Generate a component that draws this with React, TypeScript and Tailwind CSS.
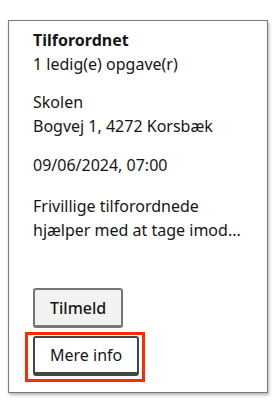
import React from "react";

export default function App() {
  return (
    <div className="w-[277px] h-[406px] bg-white pt-[20px] pl-[8px]" style={{ fontFamily: '"Noto Sans", sans-serif' }}>
      <div className="w-[260px] h-[373px] border border-[#7a7a7a] bg-white shadow-[1px_2px_3px_rgba(0,0,0,0.3)] flex flex-col px-[24px] pt-[7px] pb-[16px] text-[16px] leading-[24px] text-[#161616]">
        <div>
          <div className="font-bold">Tilforordnet</div>
          <div>1 ledig(e) opgave(r)</div>
        </div>
        <div className="mt-[14px]">
          <div>Skolen</div>
          <div>Bogvej 1, 4272 Korsbæk</div>
        </div>
        <div className="mt-[15px]">09/06/2024, 07:00</div>
        <div className="mt-[17px]">
          <div>Frivillige tilforordnede</div>
          <div>hjælper med at tage imod...</div>
        </div>
        <div className="mt-auto flex flex-col items-start gap-[8px]">
          <button className="h-[40px] px-[15px] rounded-[3px] border-2 border-b-[3px] border-[#767676] bg-[#f2f2f2] font-medium text-[#161616]">
            Tilmeld
          </button>
          <div className="relative">
            <button className="h-[40px] px-[15px] rounded-[3px] border-2 border-b-[4px] border-[#454545] bg-white text-[#161616]">
              Mere info
            </button>
            <div className="absolute left-[-8px] top-[-4px] right-[-6px] bottom-[-6px] border-[3px] border-[#ff2a00] pointer-events-none" />
          </div>
        </div>
      </div>
    </div>
  );
}
